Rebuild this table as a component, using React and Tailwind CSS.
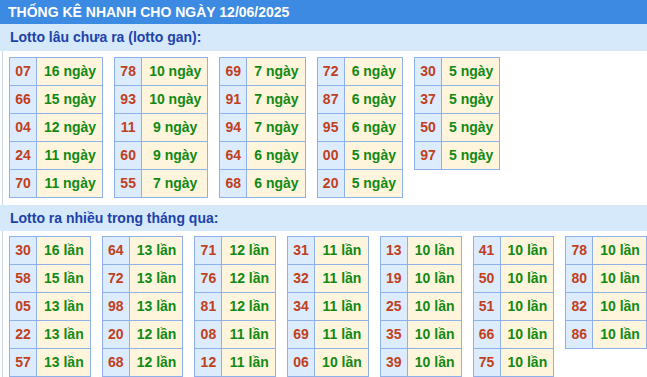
import React from "react";

const gan = [
  [["07", "16 ngày"], ["66", "15 ngày"], ["04", "12 ngày"], ["24", "11 ngày"], ["70", "11 ngày"]],
  [["78", "10 ngày"], ["93", "10 ngày"], ["11", "9 ngày"], ["60", "9 ngày"], ["55", "7 ngày"]],
  [["69", "7 ngày"], ["91", "7 ngày"], ["94", "7 ngày"], ["64", "6 ngày"], ["68", "6 ngày"]],
  [["72", "6 ngày"], ["87", "6 ngày"], ["95", "6 ngày"], ["00", "5 ngày"], ["20", "5 ngày"]],
  [["30", "5 ngày"], ["37", "5 ngày"], ["50", "5 ngày"], ["97", "5 ngày"]],
];

const nhieu = [
  [["30", "16 lần"], ["58", "15 lần"], ["05", "13 lần"], ["22", "13 lần"], ["57", "13 lần"]],
  [["64", "13 lần"], ["72", "13 lần"], ["98", "13 lần"], ["20", "12 lần"], ["68", "12 lần"]],
  [["71", "12 lần"], ["76", "12 lần"], ["81", "12 lần"], ["08", "11 lần"], ["12", "11 lần"]],
  [["31", "11 lần"], ["32", "11 lần"], ["34", "11 lần"], ["69", "11 lần"], ["06", "10 lần"]],
  [["13", "10 lần"], ["19", "10 lần"], ["25", "10 lần"], ["35", "10 lần"], ["39", "10 lần"]],
  [["41", "10 lần"], ["50", "10 lần"], ["51", "10 lần"], ["66", "10 lần"], ["75", "10 lần"]],
  [["78", "10 lần"], ["80", "10 lần"], ["82", "10 lần"], ["86", "10 lần"]],
];

function Table({ rows }) {
  return (
    <div className="grid grid-cols-[27px_auto] border-l border-t border-[#8fb1ea] self-start">
      {rows.map(([n, v], i) => (
        <React.Fragment key={i}>
          <div className="h-7 flex items-center justify-center border-r border-b border-[#8fb1ea] bg-[#dcecfc] text-[#c0401e]">
            {n}
          </div>
          <div className="h-7 flex items-center justify-center pl-[7px] pr-[6px] border-r border-b border-[#8fb1ea] bg-[#fff4dc] text-[#118a14]">
            {v}
          </div>
        </React.Fragment>
      ))}
    </div>
  );
}

function Title({ children, h }) {
  return (
    <div className={`${h} flex items-center pl-[10px] bg-[#d5e9fb] text-[#1d42aa] text-[14px] font-bold`}>
      {children}
    </div>
  );
}

export default function App() {
  return (
    <div
      className="w-[647px] h-[377px] overflow-hidden bg-white font-bold text-[14px]"
      style={{ fontFamily: '"Liberation Sans", Arial, sans-serif' }}
    >
      <div className="h-[24px] flex items-center pl-[8px] bg-[#3d8ae2] text-white text-[14px] font-bold">
        THỐNG KÊ NHANH CHO NGÀY 12/06/2025
      </div>
      <Title h="h-[27px]">Lotto lâu chưa ra (lotto gan):</Title>
      <div className="ml-[2px] border-l border-[#c8d6ea] pl-[6px] pt-[6px] pb-[7px] flex gap-[11px]">
        {gan.map((t, i) => (
          <Table key={i} rows={t} />
        ))}
      </div>
      <Title h="h-[26px]">Lotto ra nhiều trong tháng qua:</Title>
      <div className="ml-[2px] border-l border-[#c8d6ea] pl-[6px] pt-[5px] h-[200px] flex gap-[11px]">
        {nhieu.map((t, i) => (
          <Table key={i} rows={t} />
        ))}
      </div>
    </div>
  );
}
